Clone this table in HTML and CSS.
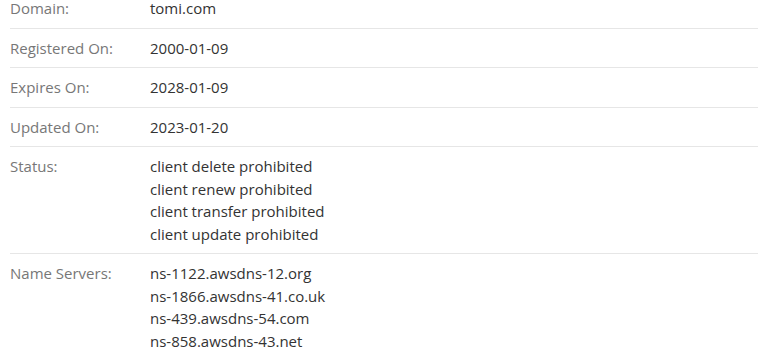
FILE: index.html
```html
<!DOCTYPE html>
<html lang="en">
<head>
  <meta charset="UTF-8">
  <meta name="viewport" content="width=device-width, initial-scale=1.0">
  <title>Whois - tomi.com</title>
  <link rel="stylesheet" href="styles.css">
</head>
<body>
  <div class="whois">
    <div class="row">
      <div class="label">Domain:</div>
      <div class="value">tomi.com</div>
    </div>
    <div class="row">
      <div class="label">Registered On:</div>
      <div class="value">2000-01-09</div>
    </div>
    <div class="row">
      <div class="label">Expires On:</div>
      <div class="value">2028-01-09</div>
    </div>
    <div class="row">
      <div class="label">Updated On:</div>
      <div class="value">2023-01-20</div>
    </div>
    <div class="row">
      <div class="label">Status:</div>
      <div class="value">
        <div>client delete prohibited</div>
        <div>client renew prohibited</div>
        <div>client transfer prohibited</div>
        <div>client update prohibited</div>
      </div>
    </div>
    <div class="row">
      <div class="label">Name Servers:</div>
      <div class="value">
        <div>ns-1122.awsdns-12.org</div>
        <div>ns-1866.awsdns-41.co.uk</div>
        <div>ns-439.awsdns-54.com</div>
        <div>ns-858.awsdns-43.net</div>
      </div>
    </div>
  </div>
</body>
</html>
```

FILE: styles.css
```css
body {
  margin: 0;
  padding: 0;
  background: #fff;
  font-family: "Open Sans", "Liberation Sans", sans-serif;
  font-size: 15px;
  line-height: 1.5;
}

.whois {
  margin: -11px 1px 0 10px;
}
.row {
  display: flex;
  padding: 8px 0;
  border-top: 1px solid #e6e6e6;
}
.row:first-child {
  border-top: none;
}
.label {
  width: 140px;
  flex-shrink: 0;
  color: #777;
}
.value {
  color: #333;
}
```
